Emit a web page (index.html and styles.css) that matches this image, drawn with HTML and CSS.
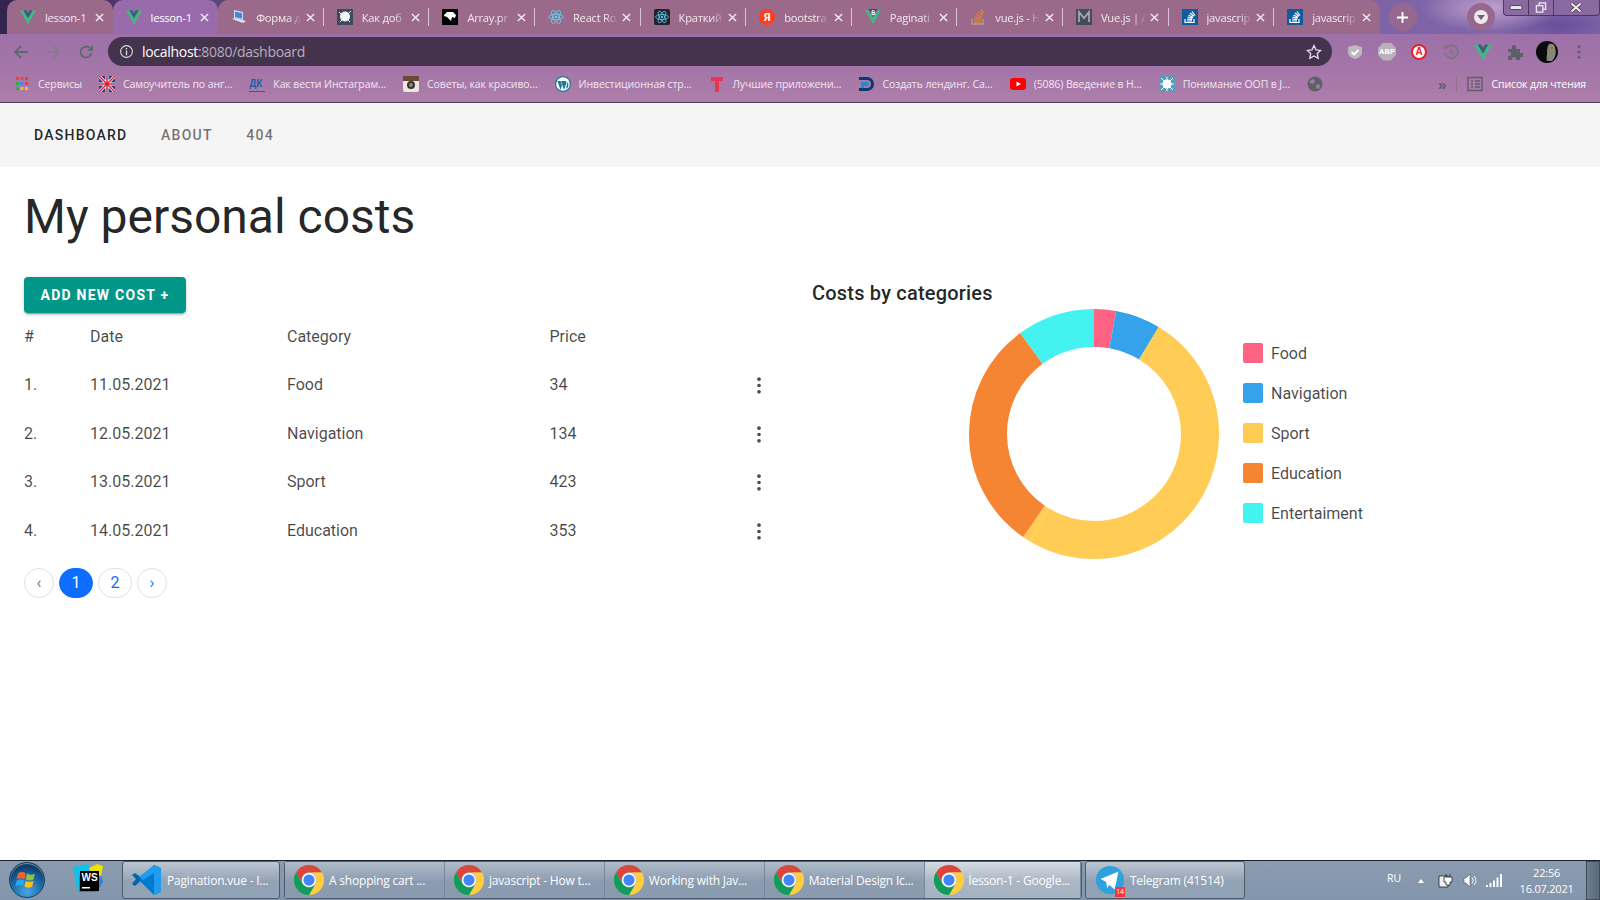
FILE: index.html
```html
<!DOCTYPE html>
<html lang="en">
<head>
<meta charset="utf-8">
<title>lesson-1</title>
<link rel="stylesheet" href="styles.css">
</head>
<body>
<svg class="sprites" aria-hidden="true">
  <symbol id="vue" viewBox="0 0 24 24"><path fill="#41b883" d="M0 2h5l7 12 7-12h5L12 23z"/><path fill="#35607a" d="M5 2h4.500L12 6.500 14.500 2H19l-7 12z"/></symbol>
  <symbol id="chrome" viewBox="0 0 48 48"><path fill="#db4437" d="M24 0A24 24 0 0 1 44.800 12H24a12 12 0 0 0-10.400 18L3.200 12A24 24 0 0 1 24 0z"/><path fill="#ffcd40" d="M44.800 12A24 24 0 0 1 24 48l10.400-18A12 12 0 0 0 24 12z"/><path fill="#0f9d58" d="M3.200 12l10.400 18a12 12 0 0 0 20.800 0L24 48A24 24 0 0 1 3.200 12z"/><circle cx="24" cy="24" r="11.500" fill="#fff"/><circle cx="24" cy="24" r="9" fill="#4285f4"/></symbol>
  <symbol id="so" viewBox="0 0 16 16"><rect width="16" height="16" fill="#0f5c9c"/><path fill="none" stroke="#fff" stroke-width="1.200" d="M3 10v3.500h9V10M5 12h5M5 10l5 .6M5.500 8l5 1.300M6.500 6l4.500 2.400M8 4l4 3.200M10 2.500l3 4"/></symbol>
  <symbol id="react" viewBox="0 0 24 24"><g fill="none" stroke="#5ed3f3" stroke-width="1.300"><ellipse cx="12" cy="12" rx="11" ry="4.300"/><ellipse cx="12" cy="12" rx="11" ry="4.300" transform="rotate(60 12 12)"/><ellipse cx="12" cy="12" rx="11" ry="4.300" transform="rotate(120 12 12)"/></g><circle cx="12" cy="12" r="2" fill="#5ed3f3"/></symbol>
  <symbol id="close" viewBox="0 0 10 10"><path stroke="#f1e8f1" stroke-width="1.600" d="M1 1l8 8M9 1L1 9"/></symbol>
  <symbol id="dots" viewBox="0 0 24 24"><circle cx="12" cy="4" r="2.300"/><circle cx="12" cy="12" r="2.300"/><circle cx="12" cy="20" r="2.300"/></symbol>
</svg>

<header class="browser">
  <div class="tabstrip">
    <div class="tab"><svg class="fav"><use href="#vue"/></svg><span class="tab-title">lesson-1</span><svg class="tab-x"><use href="#close"/></svg></div>
    <div class="tab active"><svg class="fav"><use href="#vue"/></svg><span class="tab-title">lesson-1</span><svg class="tab-x"><use href="#close"/></svg></div>
    <div class="tab sep"><svg class="fav" viewBox="0 0 16 16"><path fill="#cfe0f5" d="M3 1l9 2v8l-9-2z"/><path fill="#4a86d8" d="M4 2.500l7 1.500v5.700L4 8.200z"/><path fill="#dfe6f0" d="M1 10l3-1 11 3-3 2z"/></svg><span class="tab-title">Форма д</span><svg class="tab-x"><use href="#close"/></svg></div>
    <div class="tab sep"><svg class="fav" viewBox="0 0 16 16"><rect width="16" height="16" fill="#3d4a5c"/><circle cx="8" cy="7.500" r="5" fill="#f2f2f2"/><path stroke="#f2f2f2" d="M2 3l3 3M14 2l-3 3M3 13l3-3M13 13l-3-3"/></svg><span class="tab-title">Как доб</span><svg class="tab-x"><use href="#close"/></svg></div>
    <div class="tab sep"><svg class="fav" viewBox="0 0 16 16"><rect width="16" height="16" fill="#000"/><path fill="#fff" d="M2 6l3-3h6l3 3-1 3-3-1-1 4-2-2-2-2-3-1z"/></svg><span class="tab-title">Array.pr</span><svg class="tab-x"><use href="#close"/></svg></div>
    <div class="tab sep"><svg class="fav"><use href="#react"/></svg><span class="tab-title">React Ro</span><svg class="tab-x"><use href="#close"/></svg></div>
    <div class="tab sep"><svg class="fav" viewBox="0 0 16 16"><rect width="16" height="16" rx="2" fill="#20232a"/><svg x="1" y="1" width="14" height="14"><use href="#react"/></svg></svg><span class="tab-title">Краткий</span><svg class="tab-x"><use href="#close"/></svg></div>
    <div class="tab sep"><span class="fav ya">Я</span><span class="tab-title">bootstra</span><svg class="tab-x"><use href="#close"/></svg></div>
    <div class="tab sep"><svg class="fav" viewBox="0 0 24 24"><path fill="#41b883" d="M0 1h5l7 12 7-12h5L12 23z"/><path fill="#563d7c" d="M5 0h14l-7 12z"/><path stroke="#fff" stroke-width="1.500" fill="none" d="M10.500 2.500h2.500a1.500 1.500 0 0 1 0 3h-2.500zM10.500 5.500h3a1.500 1.500 0 0 1 0 3h-3z"/></svg><span class="tab-title">Paginati</span><svg class="tab-x"><use href="#close"/></svg></div>
    <div class="tab sep"><svg class="fav" viewBox="0 0 16 16"><path fill="none" stroke="#a5a0a0" stroke-width="1.300" d="M2 10v5h11v-5"/><path fill="none" stroke="#e87c30" stroke-width="1.300" d="M4 13h7M4 10.500l7 .6M4.500 8l7 1.500M6 5l6 3.200M8.500 2.500l4.500 4M11 0l2.500 5"/></svg><span class="tab-title">vue.js - H</span><svg class="tab-x"><use href="#close"/></svg></div>
    <div class="tab sep"><svg class="fav" viewBox="0 0 16 16"><rect width="16" height="16" fill="#3f4d5e"/><path fill="none" stroke="#b0a0b0" stroke-width="1.800" d="M3 13V3l5 6 5-6v10"/></svg><span class="tab-title">Vue.js | A</span><svg class="tab-x"><use href="#close"/></svg></div>
    <div class="tab sep"><svg class="fav"><use href="#so"/></svg><span class="tab-title">javascrip</span><svg class="tab-x"><use href="#close"/></svg></div>
    <div class="tab sep"><svg class="fav"><use href="#so"/></svg><span class="tab-title">javascrip</span><svg class="tab-x"><use href="#close"/></svg></div>
    <div class="round-btn newtab"><svg viewBox="0 0 14 14" class="ico14"><path stroke="#fff" stroke-width="2" d="M7 1v12M1 7h12"/></svg></div>
    <div class="round-btn search"><span class="search-dot"><span class="search-tri"></span></span></div>
    <div class="winctl">
      <span class="winbtn min"><svg viewBox="0 0 14 10" class="wico"><rect x="1" y="3" width="12" height="4" rx="1.500" fill="#e8e4ee" stroke="#333" stroke-width=".8"/></svg></span>
      <span class="winbtn max"><svg viewBox="0 0 14 12" class="wico"><rect x="5" y="1" width="7" height="7" fill="none" stroke="#e8e4ee" stroke-width="1.500"/><rect x="2" y="4" width="7" height="7" fill="#8a6aa0" stroke="#e8e4ee" stroke-width="1.500"/></svg></span>
      <span class="winbtn cls"><svg viewBox="0 0 14 10" class="wico"><path stroke="#333" stroke-width="3.400" d="M2.500 1l9 8M11.500 1l-9 8"/><path stroke="#eee8f0" stroke-width="2.200" d="M2.500 1l9 8M11.500 1l-9 8"/></svg></span>
    </div>
  </div>

  <div class="toolbar">
    <svg class="nav-ico back" viewBox="0 0 16 16"><path fill="none" stroke="#5f6a6a" stroke-width="1.800" d="M15 8H2M8 2L2 8l6 6"/></svg>
    <svg class="nav-ico fwd" viewBox="0 0 16 16"><path fill="none" stroke="#8a7a90" stroke-width="1.800" d="M1 8h13M8 2l6 6-6 6"/></svg>
    <svg class="nav-ico reload" viewBox="0 0 16 16"><path fill="none" stroke="#5f6a6a" stroke-width="1.800" d="M13.500 8.500a5.500 5.500 0 1 1-1.600-4.400"/><path fill="#5f6a6a" d="M15 1v6H9z"/></svg>
    <div class="omnibox">
      <svg class="info" viewBox="0 0 16 16"><circle cx="8" cy="8" r="6.300" fill="none" stroke="#ddd" stroke-width="1.200"/><path stroke="#ddd" stroke-width="1.400" d="M8 7v5M8 4.200v1.600"/></svg>
      <span class="url"><span class="host">localhost</span>:8080/dashboard</span>
      <svg class="star" viewBox="0 0 16 16"><path fill="none" stroke="#e6e0e8" stroke-width="1.300" d="M8 1.500l2 4.300 4.700.6-3.400 3.200.9 4.700L8 12l-4.200 2.300.9-4.700L1.300 6.400 6 5.800z"/></svg>
    </div>
    <div class="ext-row">
      <span class="ext"><svg viewBox="0 0 16 16" class="ext-ico"><path fill="#bdb8bd" d="M8 1l7 2v5c0 4-3.500 6-7 7-3.500-1-7-3-7-7V3z"/><path fill="none" stroke="#fff" stroke-width="1.800" d="M4.500 8l2.500 2.500 4.500-4.500"/></svg></span>
      <span class="ext"><span class="abp">ABP</span></span>
      <span class="ext"><span class="adg">A</span></span>
      <span class="ext"><svg viewBox="0 0 16 16" class="ext-ico"><path fill="none" stroke="#7f7486" stroke-width="2" d="M3 4a6.500 6.500 0 1 1-1 5M8 4.500V8l2.500 2"/><path fill="#7f7486" d="M0 2l5 .5L1 6z"/></svg></span>
      <span class="ext"><svg class="vue-ext"><use href="#vue"/></svg></span>
      <span class="ext"><svg viewBox="0 0 16 16" class="ext-ico"><path fill="#5f5f68" d="M1 5h4V3a2 2 0 0 1 4 0v2h4v4h2a2 2 0 0 1 0 4h-2v3H9v-1a2 2 0 0 0-4 0v1H1v-4h1a2 2 0 0 0 0-4H1z"/></svg></span>
      <span class="ext"><svg viewBox="0 0 22 22" class="avatar"><circle cx="11" cy="11" r="11" fill="#0a0a0a"/><path fill="#85857e" d="M13 3c4-1 6 1 6 4 2 5 0 10-3 13h-5c-1-3 0-5 0-7 0-4 0-7 2-10z"/><circle cx="16" cy="7" r="1.700" fill="#c9a24a"/><circle cx="16" cy="7" r=".8" fill="#111"/></svg></span>
      <span class="ext"><svg viewBox="0 0 4 16" class="menu-dots"><circle cx="2" cy="2" r="1.700"/><circle cx="2" cy="8" r="1.700"/><circle cx="2" cy="14" r="1.700"/></svg></span>
    </div>
  </div>

  <div class="bookmarks">
    <span class="bm b1"><svg class="bm-ico" viewBox="0 0 16 16"><path fill="#ea4335" d="M2 1h3v3H2zM6.500 1h3v3h-3zM11 1h3v3h-3z"/><path fill="#34a853" d="M2 6h3v3H2z"/><path fill="#4285f4" d="M6.500 6h3v3h-3z"/><path fill="#ea4335" d="M11 6h3v3h-3z"/><path fill="#34a853" d="M2 11h3v3H2z"/><path fill="#fbbc05" d="M6.500 11h3v3h-3zM11 11h3v3h-3z"/></svg>Сервисы</span>
    <span class="bm"><svg class="bm-ico" viewBox="0 0 16 16"><rect width="16" height="16" fill="#2a3f8a"/><path stroke="#fff" stroke-width="3" d="M0 0l16 16M16 0L0 16M8 0v16M0 8h16"/><path stroke="#d8263a" stroke-width="1.500" d="M0 0l16 16M16 0L0 16M8 0v16M0 8h16"/></svg>Самоучитель по анг...</span>
    <span class="bm"><span class="bm-ico dk">ДК</span>Как вести Инстаграм...</span>
    <span class="bm"><svg class="bm-ico" viewBox="0 0 16 16"><rect width="16" height="16" rx="2" fill="#ece6e0"/><rect width="16" height="5" fill="#6b4a35"/><circle cx="8" cy="9" r="4" fill="#333"/><circle cx="8" cy="9" r="2" fill="#888"/></svg>Советы, как красиво...</span>
    <span class="bm"><svg class="bm-ico" viewBox="0 0 16 16"><circle cx="8" cy="8" r="8" fill="#21759b"/><circle cx="8" cy="8" r="6.800" fill="#fff"/><path fill="#21759b" d="M2.500 5l3 9 1.500-4.500L5.500 5zM6 5l3 9 2.500-7c.5-1.500-.5-2-1.500-2zM12.500 6l-1.500 7c2-1 3.500-4 1.500-7z"/></svg>Инвестиционная стр...</span>
    <span class="bm"><svg class="bm-ico" viewBox="0 0 16 16"><path fill="#e8384f" d="M2 1h12v4H10v11H6V5H2z"/></svg>Лучшие приложени...</span>
    <span class="bm"><svg class="bm-ico" viewBox="0 0 16 16"><path fill="#0a3a6e" d="M1 1h8a7 7 0 0 1 0 14H1v-3h8a4 4 0 0 0 0-8H1z"/><path fill="#1a8fd8" d="M3 6h6a2 2 0 0 1 0 4H6v2H3z"/></svg>Создать лендинг. Са...</span>
    <span class="bm"><svg class="bm-ico" viewBox="0 0 16 16"><rect y="2" width="16" height="12" rx="3" fill="#f00"/><path fill="#fff" d="M6.500 5.500L11 8l-4.500 2.500z"/></svg>(5086) Введение в Н...</span>
    <span class="bm"><svg class="bm-ico" viewBox="0 0 16 16"><rect width="16" height="16" fill="#5b9ab8"/><circle cx="8" cy="8" r="4.500" fill="#fff"/><path stroke="#fff" d="M2 2l12 12M14 2L2 14M8 1v14M1 8h14"/></svg>Понимание ООП в J...</span>
    <span class="bm"><svg class="bm-ico" viewBox="0 0 16 16"><circle cx="8" cy="8" r="7.500" fill="#5f6068"/><path fill="#a87ca8" d="M3 5l3-2 2 2-2 3-3-1zM10 8l3 1-1 4-3-1z"/></svg></span>
    <span class="bm-more">»</span>
    <span class="bm-sep"></span>
    <span class="bm reading"><svg class="bm-ico" viewBox="0 0 16 16"><path fill="none" stroke="#5f5f68" stroke-width="1.500" d="M1 1.500h14v13H1zM4 5h2M8 5h5M4 8h2M8 8h5M4 11h2M8 11h5"/></svg>Список для чтения</span>
  </div>
</header>

<nav class="appbar">
  <a class="nav-link current">Dashboard</a>
  <a class="nav-link">About</a>
  <a class="nav-link">404</a>
</nav>

<main class="page">
  <h1 class="title">My personal costs</h1>
  <div class="columns">
    <section class="costs">
      <button class="add-btn">Add new cost +</button>
      <div class="row head"><span>#</span><span>Date</span><span>Category</span><span>Price</span><span></span></div>
      <div class="row"><span>1.</span><span>11.05.2021</span><span>Food</span><span>34</span><svg class="more"><use href="#dots"/></svg></div>
      <div class="row"><span>2.</span><span>12.05.2021</span><span>Navigation</span><span>134</span><svg class="more"><use href="#dots"/></svg></div>
      <div class="row"><span>3.</span><span>13.05.2021</span><span>Sport</span><span>423</span><svg class="more"><use href="#dots"/></svg></div>
      <div class="row"><span>4.</span><span>14.05.2021</span><span>Education</span><span>353</span><svg class="more"><use href="#dots"/></svg></div>
      <div class="pager">
        <span class="pg muted">‹</span>
        <span class="pg on">1</span>
        <span class="pg">2</span>
        <span class="pg">›</span>
      </div>
    </section>
    <section class="chart">
      <h2 class="chart-title">Costs by categories</h2>
      <div class="chart-body">
        <svg class="donut" viewBox="0 0 250 250">
          <g fill="none" stroke-width="38" transform="rotate(-90 125 125)">
            <circle class="s-food" cx="125" cy="125" r="106" pathLength="360" stroke-dasharray="10.200 349.800"/>
            <circle class="s-nav" cx="125" cy="125" r="106" pathLength="360" stroke-dasharray="21 339" stroke-dashoffset="-10.200"/>
            <circle class="s-sport" cx="125" cy="125" r="106" pathLength="360" stroke-dasharray="179.800 180.200" stroke-dashoffset="-31.200"/>
            <circle class="s-sport" cx="125" cy="125" r="106" pathLength="360" stroke-dasharray="3.500 356.500" stroke-dashoffset="-211"/>
            <circle class="s-edu" cx="125" cy="125" r="106" pathLength="360" stroke-dasharray="109.300 250.700" stroke-dashoffset="-214.500"/>
            <circle class="s-ent" cx="125" cy="125" r="106" pathLength="360" stroke-dasharray="36.200 323.800" stroke-dashoffset="-323.800"/>
          </g>
        </svg>
        <ul class="legend">
          <li><i class="sw food"></i>Food</li>
          <li><i class="sw nav"></i>Navigation</li>
          <li><i class="sw sport"></i>Sport</li>
          <li><i class="sw edu"></i>Education</li>
          <li><i class="sw ent"></i>Entertaiment</li>
        </ul>
      </div>
    </section>
  </div>
</main>

<footer class="taskbar">
  <div class="start">
    <span class="orb"><svg viewBox="0 0 20 20" class="flag"><path fill="#f4602a" d="M3 5c2-1.500 4-1.500 6 0l-1 4.500c-2-1.200-4-1.200-6 0z"/><path fill="#8cc63f" d="M10 5c2 1.200 4 1.200 6 0l-1 4.500c-2 1.200-4 1.200-6 0z"/><path fill="#2aa8ee" d="M2 10.500c2-1.200 4-1.200 6 0l-1 4.500c-2-1.200-4-1.200-6 0z"/><path fill="#ffbe1a" d="M9 10.500c2 1.200 4 1.200 6 0l-1 4.500c-2 1.200-4 1.200-6 0z"/></svg></span>
    <svg class="ws" viewBox="0 0 32 28"><path fill="#0dc3e8" d="M0 3l14-3 5 6-6 22H5z"/><path fill="#2f7fe6" d="M6 12l20-6 4 12-6 10H6z"/><path fill="#f5e100" d="M16 4l8-4 6 2-2 10-10-2z"/><rect x="7" y="7" width="19" height="20" fill="#000"/><text x="16.500" y="17" class="ws-text">WS</text><rect x="9" y="23" width="8" height="1.500" fill="#fff"/></svg>
  </div>
  <div class="task w158 lit"><svg class="task-ico vs" viewBox="0 0 32 32"><path fill="#0065a9" d="M1 11l3-2 8 6-8 7-3-2 4-5z"/><path fill="#007acc" d="M23 1l7 3v24l-7 3L9 17l-5 4 0 0 19-20z"/><path fill="#1f9cf0" d="M23 1l7 3v24l-7 3V9L12 16l-4-3z"/></svg><span class="task-text">Pagination.vue - I...</span></div>
  <div class="group">
    <div class="task"><svg class="task-ico"><use href="#chrome"/></svg><span class="task-text">A shopping cart ...</span></div>
    <div class="task"><svg class="task-ico"><use href="#chrome"/></svg><span class="task-text">javascript - How t...</span></div>
    <div class="task"><svg class="task-ico"><use href="#chrome"/></svg><span class="task-text">Working with Jav...</span></div>
    <div class="task"><svg class="task-ico"><use href="#chrome"/></svg><span class="task-text">Material Design Ic...</span></div>
    <div class="task bright"><svg class="task-ico"><use href="#chrome"/></svg><span class="task-text">lesson-1 - Google...</span></div>
  </div>
  <div class="task tg lit"><span class="tg-wrap"><svg class="task-ico" viewBox="0 0 32 32"><circle cx="16" cy="16" r="15" fill="#2fa2dc"/><path fill="#fff" d="M6 15l19-8-4 19-6-5-2 4-1-7z"/></svg><span class="tg-badge">14</span></span><span class="task-text">Telegram (41514)</span></div>
  <div class="tray">
    <span class="lang">RU</span>
    <span class="tray-up"></span>
    <svg class="tray-plug" viewBox="0 0 15 15"><path fill="#eef1f4" stroke="#222" stroke-width=".8" d="M1 3h9v11H1z"/><path fill="#fff" stroke="#222" stroke-width=".8" d="M6 4h8v5h-2v3H8V9H6zM8 1v3M12 1v3"/></svg>
    <svg class="tray-spk" viewBox="0 0 14 15"><path fill="#fff" stroke="#555" stroke-width=".6" d="M1 5h2l4-4v13l-4-4H1z"/><path fill="none" stroke="#fff" d="M9 4.500c1.500 2 1.500 4 0 6M11 3c2.500 3 2.500 6 0 9"/></svg>
    <svg class="tray-sig" viewBox="0 0 16 13"><path fill="#fff" d="M0 11h2v2H0zM3.500 9h2v4h-2zM7 6.500h2V13H7zM10.500 3.500h2V13h-2zM14 0h2v13h-2z"/></svg>
    <div class="clock"><span>22:56</span><span>16.07.2021</span></div>
    <span class="show-desk"></span>
  </div>
</footer>
</body>
</html>
```
FILE: styles.css
```css
* { box-sizing: border-box; }
html, body { margin: 0; height: 100%; }
body {
  width: 1600px; height: 900px; overflow: hidden;
  display: flex; flex-direction: column;
  background: #fff;
  font-family: Roboto, "Liberation Sans", sans-serif;
}
.sprites { display: none; }

/* browser chrome */
.browser { flex: none; font-family: "Open Sans", "Noto Sans", sans-serif; }
.tabstrip {
  height: 34px; display: flex; align-items: flex-start; padding-left: 7px;
  background:
    radial-gradient(ellipse 70px 24px at 1490px 8px, rgba(214,180,214,.75), transparent),
    radial-gradient(ellipse 60px 20px at 1560px 26px, rgba(70,50,130,.45), transparent),
    linear-gradient(90deg, #33234f 0, #5b437f 12%, #7a5d9d 60%, #7d62a6 85%, #8269ad 100%);
}
.tab {
  position: relative; flex: none; width: 105.6px; height: 34px;
  display: flex; align-items: center; padding-left: 13px;
  background: #9b6a8b; color: #f1e8f1;
  font-size: 11.2px; letter-spacing: -.25px;
}
.tab:nth-child(1) { border-radius: 10px 10px 0 0; }
.tab.active { background: #996bab; color: #fff; border-radius: 10px 10px 0 0; }
.tab.sep::before {
  content: ""; position: absolute; right: 0; top: 8px; height: 18px; width: 1px; background: #d8c4d6;
}
.tab:nth-child(13)::before { display: none; }
.tab:nth-child(13) { border-radius: 0 10px 0 0; }
.tab.active + .tab { border-radius: 10px 0 0 0; }
.fav { flex: none; width: 16px; height: 16px; margin-right: 9px; }
.ya {
  display: flex; align-items: center; justify-content: center;
  border-radius: 50%; background: #fc3f1d; color: #fff;
  font: 700 11px Roboto, sans-serif; letter-spacing: 0;
}
.tab-title {
  flex: none; width: 45px; white-space: nowrap;
  -webkit-mask-image: linear-gradient(90deg, #000 72%, transparent);
  mask-image: linear-gradient(90deg, #000 72%, transparent);
}
.tab:nth-child(-n+2) .tab-title { -webkit-mask-image: none; mask-image: none; }
.tab-x { flex: none; width: 9px; height: 9px; margin-left: 4.500px; }
.round-btn {
  flex: none; width: 28px; height: 28px; margin-top: 3px; border-radius: 50%;
  background: #96688f; display: flex; align-items: center; justify-content: center;
}
.newtab { margin-left: 9px; }
.search { margin-left: 50px; }
.ico14 { width: 13px; height: 13px; }
.search-dot {
  width: 14px; height: 14px; border-radius: 50%; background: #efe8ef;
  display: flex; align-items: center; justify-content: center;
}
.search-tri { border: 4px solid transparent; border-top: 5px solid #7a5a80; border-bottom: 0; }
.winctl {
  flex: none; margin-left: 8px; width: 97px; height: 16px; display: flex;
  border: 1px solid #4a3a5a; border-top: 0; border-radius: 0 0 4px 4px;
  background: #8a6aa0;
}
.winbtn { display: flex; align-items: center; justify-content: center; border-right: 1px solid #4a3a5a; }
.winbtn:last-child { border-right: 0; }
.min { width: 25px; } .max { width: 25px; } .cls { flex: 1; }
.wico { width: 14px; height: 11px; }

.toolbar {
  height: 35px; display: flex; align-items: center; padding-left: 13px;
  background: linear-gradient(#9d70a8, #a476a8);
}
.nav-ico { flex: none; width: 16px; height: 16px; margin-right: 16px; }
.reload { margin-left: 1px; margin-right: 14px; }
.omnibox {
  flex: none; width: 1224px; height: 29px; border-radius: 15px;
  background: #44334c; display: flex; align-items: center; padding-left: 11px; color: #b9adbe;
}
.info { flex: none; width: 15px; height: 15px; margin-right: 8px; }
.url { font-size: 14px; letter-spacing: -.3px; }
.host { color: #fff; }
.star { flex: none; width: 16px; height: 16px; margin-left: auto; margin-right: 10px; }
.ext-row { display: flex; margin-left: 7px; }
.ext { flex: none; width: 32px; height: 24px; display: flex; align-items: center; justify-content: center; }
.ext-ico { width: 16px; height: 16px; }
.vue-ext { width: 18px; height: 18px; }
.abp {
  width: 18px; height: 18px; background: #b8b2b8; color: #fff;
  clip-path: polygon(30% 0, 70% 0, 100% 30%, 100% 70%, 70% 100%, 30% 100%, 0 70%, 0 30%);
  font: 700 7.500px/18px "Liberation Sans", sans-serif; text-align: center;
}
.adg {
  width: 16px; height: 16px; border-radius: 50%; background: #fff; border: 2px solid #e8202a; color: #e8202a;
  font: 700 10px/12px "Liberation Sans", sans-serif; text-align: center;
}
.avatar { width: 22px; height: 22px; }
.menu-dots { width: 4px; height: 14px; fill: #5f5f68; }

.bookmarks {
  height: 34px; display: flex; align-items: center; padding: 0 0 3px 14px;
  background: linear-gradient(#a476a8, #ad7ea8); border-bottom: 1px solid #4c3c52;
  color: #f0e6f0; font-size: 10.5px; letter-spacing: -.1px; white-space: nowrap;
}
.bm { flex: none; display: flex; align-items: center; margin-right: 17px; }
.bm-ico { flex: none; width: 16px; height: 16px; margin-right: 8px; }
.dk {
  color: #1f5fa8; font: 700 10px/15px "Liberation Sans", sans-serif; letter-spacing: -.3px;
  border-bottom: 1px solid #1f5fa8;
}
.bm-more { margin-left: auto; margin-right: 10px; color: #5f5f68; font-size: 14px; font-weight: 700; }
.bm-sep { width: 1px; height: 16px; background: #917092; margin-right: 10px; }
.reading { margin-right: 14px; color: #fff; }

/* app */
.appbar {
  flex: none; height: 64px; padding-left: 18px; display: flex; align-items: center; gap: 1.500px;
  background: #f5f5f5;
}
.nav-link {
  padding: 0 16px; font-size: 14px; font-weight: 500; text-transform: uppercase;
  letter-spacing: 1.25px; color: rgba(0,0,0,.55);
}
.nav-link.current { color: rgba(0,0,0,.87); }

.page { flex: 1; min-height: 0; padding: 22px 0 0 24px; }
.title {
  margin: 0 0 32px; font-size: 48px; line-height: 56px; font-weight: 400;
  color: rgba(0,0,0,.87);
}
.columns { display: grid; grid-template-columns: 776px 1fr; }
.add-btn {
  display: block; width: 162px; height: 36px; padding: 0; border: 0; border-radius: 4px;
  background: #009688; color: #fff; font: 700 14px Roboto, sans-serif; letter-spacing: 1.25px;
  text-transform: uppercase;
  box-shadow: 0 3px 1px -2px rgba(0,0,0,.2), 0 2px 2px rgba(0,0,0,.14), 0 1px 5px rgba(0,0,0,.12);
}
.row {
  display: grid; grid-template-columns: 66px 197px 262.500px 197.500px 24px; align-items: center;
  height: 48.700px; font-size: 16px; color: rgba(0,0,0,.72);
}
.row.head { height: 47px; }
.more { width: 24px; height: 19px; margin-top: 2px; fill: #4a4a4a; }
.pager { display: flex; gap: 5px; margin-top: 13px; font-size: 16px; }
.pg {
  height: 30px; min-width: 30px; padding: 0 11.500px; border: 1px solid #dee2e6; border-radius: 50rem;
  display: flex; align-items: center; justify-content: center; color: #0d6efd;
}
.pg.muted { color: #6c757d; }
.pg.on { background: #0d6efd; border-color: #0d6efd; color: #fff; }

.chart-title {
  margin: 0; padding-left: 12px; font-size: 20px; line-height: 32px; font-weight: 500;
  letter-spacing: .2px; color: rgba(0,0,0,.87);
}
.chart-body { display: flex; align-items: center; padding-left: 169px; }
.donut { flex: none; width: 250px; height: 250px; }
.s-food { stroke: #ff6384; } .s-nav { stroke: #36a2eb; } .s-sport { stroke: #ffcd56; }
.s-edu { stroke: #f58433; } .s-ent { stroke: #44f3f0; }
.legend { list-style: none; margin: 0 0 2px 24px; padding: 0; font-size: 16px; color: rgba(0,0,0,.72); }
.legend li { height: 40px; display: flex; align-items: center; }
.sw { width: 20px; height: 20px; border-radius: 2px; margin-right: 8px; }
.food { background: #ff6384; } .nav { background: #36a2eb; } .sport { background: #ffcd56; }
.edu { background: #f58433; } .ent { background: #44f3f0; }

/* taskbar */
.taskbar {
  flex: none; height: 40px; display: flex; border-top: 1px solid #1b2430; padding-bottom: 1px;
  background: linear-gradient(#8b9bb0, #8296ab);
  color: #fff; font-family: "Open Sans", "Noto Sans", sans-serif; font-size: 12px;
}
.start { flex: none; width: 122px; display: flex; align-items: center; }
.orb {
  margin-left: 9px; width: 36px; height: 36px; border-radius: 50%;
  background: radial-gradient(circle at 50% 85%, #49a8e4 0, #1d6aa8 45%, #0c3f6e 75%, #0a2c50 100%);
  border: 1px solid #16405f; box-shadow: inset 0 1px 1px rgba(255,255,255,.5);
  display: flex; align-items: center; justify-content: center;
}
.flag { width: 26px; height: 26px; }
.ws { flex: none; margin-left: 28px; width: 32px; height: 28px; margin-top: -4px; }
.ws-text { font: 700 10px "Liberation Sans", sans-serif; fill: #fff; text-anchor: middle; }
.task {
  flex: none; width: 159.900px; height: 100%; display: flex; align-items: center; padding-left: 9px;
  background: linear-gradient(#b0bcc9, #8a9cb0 55%, #8a9bb0);
  border-right: 1px solid #77889c;
}
.w158 { width: 158px; margin-right: 4px; padding-left: 8px; }
.lit { border: 1px solid #4c5a6c; border-radius: 3px; background: linear-gradient(#bcc6d2, #92a2b5 55%, #92a3b6); }
.tg { width: 160px; margin-left: 3px; }
.group { flex: none; display: flex; border: 1px solid #4c5a6c; border-radius: 3px; }
.task.bright { width: 156.400px; background: linear-gradient(#d5dbe3, #aab6c4 55%, #a5b2c1); }
.task-ico { flex: none; width: 30px; height: 30px; margin-right: 5px; }
.task-ico.vs { width: 32px; height: 32px; margin-right: 4px; }
.task-text { white-space: nowrap; letter-spacing: -.2px; }
.tg-wrap { position: relative; display: flex; }
.tg-badge {
  position: absolute; right: 5px; bottom: -2px; width: 10px; height: 10px; background: #f33;
  font-size: 7px; line-height: 10px; text-align: center; letter-spacing: -.3px;
}
.tray { flex: 1; display: flex; align-items: center; padding-left: 142px; }
.lang { font-size: 10.500px; margin-right: 17px; margin-top: -4px; }
.tray-up { border: 3px solid transparent; border-bottom: 4px solid #fff; border-top: 0; margin-right: 14px; margin-top: 2px; }
.tray-plug { flex: none; width: 15px; height: 15px; margin-right: 10px; }
.tray-spk { flex: none; width: 14px; height: 15px; margin-right: 9px; }
.tray-sig { flex: none; width: 16px; height: 13px; }
.clock { display: flex; flex-direction: column; align-items: center; gap: 3px; width: 53px; margin-left: 18px; font-size: 11px; letter-spacing: -.2px; line-height: 13px; }
.show-desk {
  margin-left: auto; width: 14px; align-self: stretch; margin-bottom: -1px;
  border: 1px solid #3f4d5e; background: linear-gradient(90deg, #6d7d90, #5a6a7c);
}
```
